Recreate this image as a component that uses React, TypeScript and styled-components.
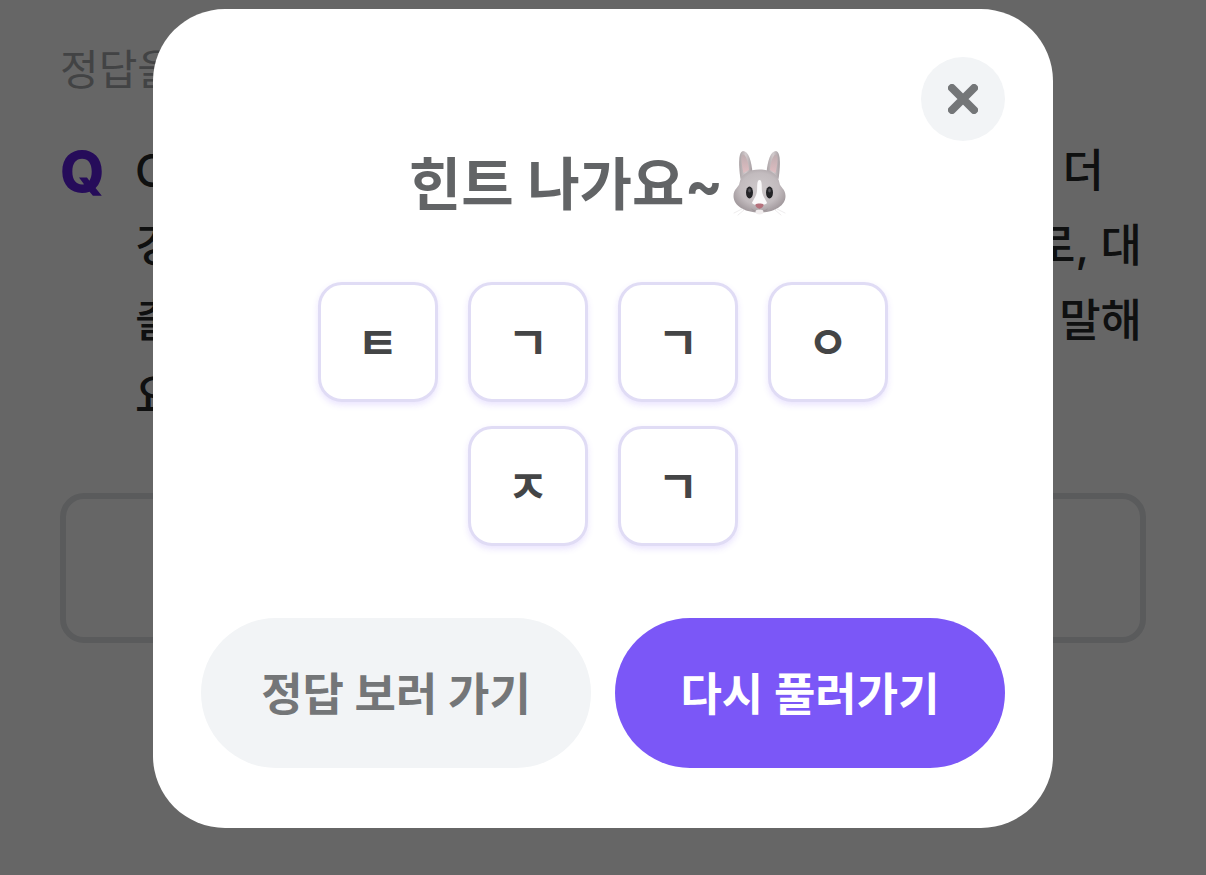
import React from 'react';
import styled, { createGlobalStyle } from 'styled-components';

const GlobalStyle = createGlobalStyle`
  *, *::before, *::after { box-sizing: border-box; }
  body {
    margin: 0;
    background: #ffffff;
    font-family: Inter, 'Noto Sans CJK KR', sans-serif;
  }
  button, input { font: inherit; }
`;

const Page = styled.main`
  min-height: 100vh;
  padding: 40px 60px;
`;

const Guide = styled.p`
  margin: 0 0 33px;
  font-size: 42px;
  line-height: 60px;
  color: #a5a8ab;
`;

const Question = styled.section`
  display: flex;
  align-items: flex-start;
  margin-bottom: 60px;
  line-height: 75px;
`;

const QuestionMark = styled.span`
  flex: 0 0 75px;
  font-size: 57px;
  font-weight: 800;
  line-height: 78px;
  color: #5f1ee0;
`;

const QuestionBody = styled.div`
  flex: 1;
  padding-right: 4px;
  font-size: 45px;
  font-weight: 500;
  color: #26282a;
`;

const QuestionLine = styled.div`
  display: flex;
  justify-content: space-between;
`;

const LineEnd = styled.span<{ $inset?: number }>`
  padding-right: ${({ $inset = 0 }) => $inset}px;
`;

const AnswerInput = styled.input`
  display: block;
  width: 100%;
  height: 150px;
  padding: 0 36px;
  border: 6px solid #e1e3e6;
  border-radius: 24px;
  background: transparent;
  font-size: 45px;
`;

const Overlay = styled.div`
  position: fixed;
  inset: 0;
  display: flex;
  align-items: flex-start;
  justify-content: center;
  padding: 9px 24px;
  overflow: auto;
  background: rgba(0, 0, 0, 0.6);
`;

const Dialog = styled.div`
  display: flex;
  flex-direction: column;
  width: 100%;
  max-width: 900px;
  padding: 48px 48px 60px;
  border-radius: 72px;
  background: #ffffff;
`;

const CloseButton = styled.button`
  display: grid;
  place-items: center;
  align-self: flex-end;
  width: 84px;
  height: 84px;
  padding: 0;
  border: 0;
  border-radius: 50%;
  background: #f2f4f6;
  color: #747678;
  cursor: pointer;
`;

const Title = styled.h2`
  display: flex;
  align-items: center;
  justify-content: center;
  gap: 8px;
  margin: 0 0 55px;
  padding-top: 2px;
  font-size: 57px;
  font-weight: 700;
  line-height: 84px;
  color: #626466;
`;

const HintList = styled.ul`
  display: flex;
  flex-wrap: wrap;
  justify-content: center;
  gap: 24px 30px;
  max-width: 600px;
  margin: 0 auto 72px;
  padding: 0;
  list-style: none;
`;

const HintTile = styled.li`
  display: grid;
  place-items: center;
  width: 120px;
  height: 120px;
  padding-bottom: 3px;
  border: 3px solid #e0dcf5;
  border-radius: 24px;
  background: #ffffff;
  box-shadow: 0 3px 6px rgba(123, 87, 246, 0.16);
  font-size: 45px;
  font-weight: 700;
  color: #444546;
`;

const Actions = styled.div`
  display: flex;
  gap: 24px;
`;

const ActionButton = styled.button<{ $primary?: boolean }>`
  flex: 1;
  height: 150px;
  padding: 0 0 3px;
  border: 0;
  border-radius: 75px;
  background: ${({ $primary }) => ($primary ? '#7b57f7' : '#f2f4f6')};
  color: ${({ $primary }) => ($primary ? '#ffffff' : '#747678')};
  font-size: 45px;
  font-weight: 700;
  cursor: pointer;
`;

const CloseIcon = () => (
  <svg width="30" height="30" viewBox="0 0 30 30" fill="none" stroke="currentColor" strokeWidth="8" strokeLinecap="round" aria-hidden="true">
    <path d="M4 4 26 26M26 4 4 26" />
  </svg>
);

const Rabbit = () => (
  <svg width="66" height="72" viewBox="0 0 66 72" role="img" aria-label="토끼">
    <defs>
      <radialGradient id="fur" cx="0.5" cy="0.45" r="0.62">
        <stop offset="0" stopColor="#cfc9cb" />
        <stop offset="0.6" stopColor="#c2bbbe" />
        <stop offset="1" stopColor="#988f93" />
      </radialGradient>
      <linearGradient id="ear" x1="0" y1="0" x2="1" y2="0">
        <stop offset="0" stopColor="#a9a1a4" />
        <stop offset="0.5" stopColor="#d2cbcd" />
        <stop offset="1" stopColor="#a39b9f" />
      </linearGradient>
      <linearGradient id="inner" x1="0" y1="0" x2="0" y2="1">
        <stop offset="0" stopColor="#bfaeb1" />
        <stop offset="1" stopColor="#dfbdc1" />
      </linearGradient>
    </defs>
    <path d="M9.500 30C8.500 24 6 3 12 2c5.500 0 8.500 10 9.500 22z" fill="url(#ear)" />
    <path d="M47.500 30C48.500 24 51 3 45 2c-5.500 0-8.500 10-9.500 22z" fill="url(#ear)" />
    <path d="M12.500 24C10 13 9.500 6 12.200 5.500 15 6 17.500 13 18 21z" fill="url(#inner)" />
    <path d="M44.500 24C47 13 47.500 6 44.800 5.500 42 6 39.500 13 39 21z" fill="url(#inner)" />
    <path d="M28.500 20.500C18 20.500 10 25 8.500 34 8 38 2.500 40 2.500 47 2.500 57 14 63.500 28.500 63.500S54.500 57 54.500 47C54.500 40 49 38 48.500 34 47 25 39 20.500 28.500 20.500z" fill="url(#fur)" />
    <path d="M28.500 31C25.500 31 26.500 38 26 42 25.500 47 22.500 50 21 54c2 3 13 3 15 0-1.500-4-4.500-7-5-12C30.500 38 31.500 31 28.500 31z" fill="#fbf9fa" />
    <ellipse cx="18.500" cy="43.500" rx="3.500" ry="6" fill="#242427" />
    <ellipse cx="38.500" cy="43.500" rx="3.500" ry="6" fill="#242427" />
    <ellipse cx="18.500" cy="41.500" rx="1.300" ry="2" fill="#56545a" />
    <ellipse cx="38.500" cy="41.500" rx="1.300" ry="2" fill="#56545a" />
    <path d="M28.500 59v2.500M28.500 61c-2 1.500-5 1.500-8-1M28.500 61c2 1.500 5 1.500 8-1" fill="none" stroke="#998f93" strokeWidth="0.800" />
    <ellipse cx="28.500" cy="63" rx="4" ry="2.400" fill="#f1edee" />
    <path d="M24.500 55.500c1-1.300 7-1.300 8 0 .5 1.800-2 4-4 4s-4.500-2.200-4-4z" fill="#b5717c" />
    <path d="M11 60 3 64M13 61 7 66M46 60l8 4M44 61l6 5" fill="none" stroke="#eae7e8" strokeWidth="0.800" strokeLinecap="round" />
  </svg>
);

const questionLines = [
  { start: 'C', end: '더', inset: 38 },
  { start: '경', end: '로, 대' },
  { start: '출', end: '말해' },
  { start: '요', end: '' },
];

const hints = ['ㅌ', 'ㄱ', 'ㄱ', 'ㅇ', 'ㅈ', 'ㄱ'];

export default function App() {
  return (
    <>
      <GlobalStyle />
      <Page>
        <Guide>정답을</Guide>
        <Question>
          <QuestionMark>Q</QuestionMark>
          <QuestionBody>
            {questionLines.map((line) => (
              <QuestionLine key={line.start}>
                <span>{line.start}</span>
                <LineEnd $inset={line.inset}>{line.end}</LineEnd>
              </QuestionLine>
            ))}
          </QuestionBody>
        </Question>
        <AnswerInput type="text" aria-label="정답" />
      </Page>
      <Overlay>
        <Dialog role="dialog" aria-modal="true" aria-labelledby="hint-title">
          <CloseButton type="button" aria-label="닫기">
            <CloseIcon />
          </CloseButton>
          <Title id="hint-title">
            힌트 나가요~
            <Rabbit />
          </Title>
          <HintList>
            {hints.map((hint, index) => (
              <HintTile key={index}>{hint}</HintTile>
            ))}
          </HintList>
          <Actions>
            <ActionButton type="button">정답 보러 가기</ActionButton>
            <ActionButton type="button" $primary>
              다시 풀러가기
            </ActionButton>
          </Actions>
        </Dialog>
      </Overlay>
    </>
  );
}
